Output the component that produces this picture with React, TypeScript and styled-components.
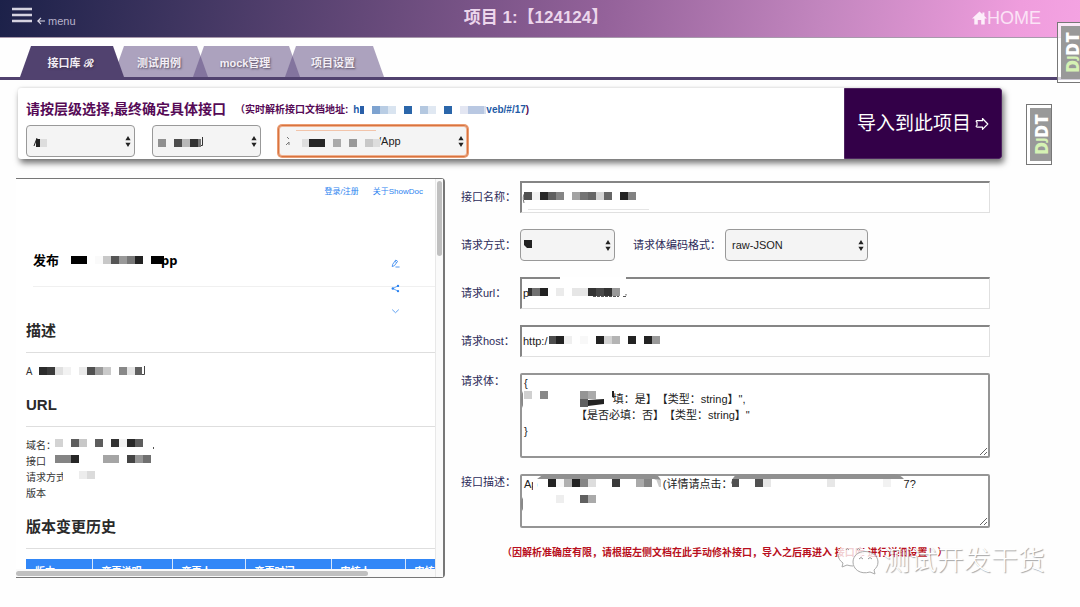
import React from 'react';
import styled, { createGlobalStyle, css } from 'styled-components';

const GlobalStyle = createGlobalStyle`
  * { box-sizing: border-box; }
  body {
    margin: 0;
    background: #fefefe;
    font-family: "Liberation Sans", "Noto Sans CJK SC", sans-serif;
    font-size: 11px;
    color: #222;
    text-spacing-trim: space-all;
  }
  a { text-decoration: none; }
`;

/* ---------- shared pieces ---------- */

type Cell = [x: number, y: number, w: number, h: number, fill: string];

const MosaicSvg = styled.svg`
  position: absolute;
  inset: 0;
  width: 100%;
  height: 100%;
  pointer-events: none;
`;

const Mosaic = ({ cells, children }: { cells: Cell[]; children?: React.ReactNode }) => (
  <MosaicSvg aria-hidden="true">
    {children}
    {cells.map(([x, y, w, h, fill], i) => (
      <rect key={i} x={x} y={y} width={w} height={h} fill={fill} />
    ))}
  </MosaicSvg>
);

/* ---------- header ---------- */

const Page = styled.div`
  position: relative;
  overflow: hidden;
  min-height: 100vh;
`;

const Header = styled.header`
  display: grid;
  grid-template-columns: 1fr auto 1fr;
  align-items: center;
  height: 38px;
  padding: 0 20px 2px 12px;
  border-bottom: 1px solid #a899ac;
  background: linear-gradient(100deg, #1c2149 0%, #3d345f 16%, #6b4c7d 37%, #94629a 56%, #c386bf 76%, #ef9ddd 94%, #f4a3e2 100%);
  color: #ecd6ec;
`;

const MenuButton = styled.button`
  display: flex;
  align-items: flex-end;
  gap: 5px;
  justify-self: start;
  padding: 0 0 6px;
  border: 0;
  background: none;
  color: #b9b4cc;
  font: 11px/12px "Liberation Sans", sans-serif;
`;

const MenuLabel = styled.span`
  display: flex;
  align-items: center;
  gap: 3px;
  margin-bottom: -4px;
`;

const ProjectTitle = styled.h1`
  margin: 0;
  font-size: 17px;
  line-height: 24px;
  font-weight: 700;
`;

const HomeLink = styled.a`
  display: flex;
  align-items: center;
  justify-self: end;
  margin-right: 19px;
  color: #fbe3f6;
  font-size: 18px;
  line-height: 24px;
`;

/* ---------- tabs ---------- */

const TabBar = styled.nav`
  display: flex;
  padding: 8px 20px 0;
  border-bottom: 3px solid #51426f;
`;

const Tab = styled.button<{ $active?: boolean; $width: number }>`
  width: ${p => p.$width}px;
  height: 31px;
  padding: 2px 3px 0 0;
  border: 0;
  clip-path: polygon(11px 0, calc(100% - 11px) 0, 100% 100%, 0 100%);
  background: ${p => (p.$active ? '#51426f' : 'rgba(89, 70, 125, 0.5)')};
  color: #f3eef5;
  font: 700 11px/28px "Liberation Sans", "Noto Sans CJK SC", sans-serif;
  text-shadow: 1px 1px 2px rgba(50, 40, 60, 0.7);
  ${p => p.$active && css`position: relative; z-index: 1;`}
  & + & { margin-left: -11px; }
  & + & + & { margin-left: -15px; }
`;

/* ---------- selector card ---------- */

const Card = styled.section`
  display: flex;
  justify-content: space-between;
  min-height: 71px;
  margin: 8px 78px 0 18px;
  border-radius: 3px;
  background: #fff;
  box-shadow: 2px 4px 6px #6f6f6f, 0 -1px 2px #eee;
`;

const CardBody = styled.div`
  padding: 9px 8px 0;
`;

const CardTitle = styled.h2`
  display: flex;
  align-items: center;
  margin: 0 0 4px;
  color: #560a56;
  font-size: 14px;
  line-height: 22px;
  font-weight: 700;
`;

const SourceNote = styled.span`
  display: flex;
  align-items: center;
  margin-left: 9px;
  padding-top: 2px;
  font-size: 10px;
  font-weight: 700;
`;

const SourceLink = styled.a`
  display: flex;
  align-items: center;
  margin-left: 5px;
  color: #1f5ba6;
`;

const SelectRow = styled.div`
  display: flex;
  gap: 17px;
`;

const ImportButton = styled.button`
  flex: none;
  display: flex;
  align-items: center;
  justify-content: center;
  gap: 4px;
  width: 158px;
  border: 1px solid #4d2360;
  border-radius: 0 3px 3px 0;
  background: #330048;
  color: #fff;
  font: 19px/24px "Liberation Sans", "Noto Sans CJK SC", sans-serif;
`;

const SelectBox = styled.span<{ $width: number }>`
  position: relative;
  display: flex;
  width: ${p => p.$width}px;
  height: 32px;
`;

const SelectControl = styled.select<{ $indent?: number; $focused?: boolean }>`
  appearance: none;
  width: 100%;
  padding: 0 0 0 ${p => p.$indent ?? 6}px;
  border: 1px solid #999;
  border-radius: 4px;
  background: #f4f4f4;
  color: #222;
  font: 11px "Liberation Sans", "Noto Sans CJK SC", sans-serif;
  ${p =>
    p.$focused &&
    css`
      border-color: #d8743f;
      box-shadow: 0 0 0 1px #eb9c72, inset 0 0 0 1px #efb292;
    `}
`;

const SelectArrows = styled.svg`
  position: absolute;
  top: 11px;
  right: 4px;
  pointer-events: none;
`;

interface SelectProps {
  id: string;
  width: number;
  value?: string;
  indent?: number;
  focused?: boolean;
  label?: string;
  cells: Cell[];
  children?: React.ReactNode;
}

const Select = ({ id, width, value = '', indent, focused, label, cells, children }: SelectProps) => (
  <SelectBox $width={width}>
    <SelectControl id={id} aria-label={label} $indent={indent} $focused={focused}>
      <option>{value}</option>
    </SelectControl>
    <Mosaic cells={cells}>{children}</Mosaic>
    <SelectArrows width="6" height="11" viewBox="0 0 6 11" aria-hidden="true">
      <path d="M3 0 L5.6 4.3 H.4Z M3 11 L5.6 6.7 H.4Z" fill="#222" />
    </SelectArrows>
  </SelectBox>
);

/* ---------- document preview ---------- */

const Workspace = styled.main`
  display: grid;
  grid-template-columns: minmax(0, 429fr) minmax(0, 529fr);
  column-gap: 16px;
  margin: 19px 90px 0 16px;
`;

const DocPanel = styled.section`
  display: grid;
  grid-template: minmax(0, 1fr) 8px / minmax(0, 1fr) 8px;
  height: 400px;
  border: solid #777;
  border-width: 1px 2px 1px 0;
  border-radius: 0 4px 4px 0;
  background: #fff;
`;

const DocView = styled.div`
  position: relative;
  overflow: hidden;
  padding: 7px 0 0 10px;
`;

const VerticalTrack = styled.div`
  grid-row: 1 / 3;
  grid-column: 2;
  padding: 2px 1px;
  border-left: 1px solid #e8e8e8;
  background: #fafafa;
`;

const HorizontalTrack = styled.div`
  padding: 2px 0 1px;
  background: #fafafa;
`;

const Thumb = styled.div<{ $vertical?: boolean }>`
  border-radius: 3px;
  background: #c0c0c0;
  ${p => (p.$vertical ? 'height: 75px;' : 'width: 84%; height: 5px;')}
`;

const DocNav = styled.div`
  display: flex;
  justify-content: flex-end;
  gap: 14px;
  padding-right: 12px;
  font-size: 8px;
  line-height: 12px;
  a { color: #2d84f0; }
`;

const DocTitle = styled.h2`
  position: relative;
  margin: 52px 0 0 7px;
  padding-bottom: 16px;
  border-bottom: 1px solid #f0f0f0;
  color: #000;
  font: 700 13px/20px "Noto Sans", "Noto Sans CJK SC", sans-serif;
`;

const TitleTail = styled.span`
  margin-left: 102px;
`;

const DocHeading = styled.h3<{ $first?: boolean }>`
  margin: ${p => (p.$first ? 33 : 15)}px 0 10px;
  padding-bottom: 10px;
  border-bottom: 1px solid #dedede;
  color: #2a2a2a;
  font: 700 15px/22px "Liberation Sans", "Noto Sans CJK SC", sans-serif;
`;

const DocText = styled.p`
  position: relative;
  margin: 0;
  color: #333;
  font: 10px/16px "Noto Sans", "Noto Sans CJK SC", sans-serif;
`;

const DocTools = styled.div`
  position: absolute;
  top: 80px;
  right: 35px;
  display: flex;
  flex-direction: column;
  gap: 16px;
  a { display: block; height: 9px; line-height: 0; }
`;

const HistoryTable = styled.table`
  width: 500px;
  table-layout: fixed;
  border-collapse: collapse;
  th {
    padding: 4px 9px;
    border-right: 1px solid #d7e7fb;
    background: #3287f7;
    color: #fff;
    font: 700 10px/16px "Noto Sans CJK SC", sans-serif;
    text-align: left;
    white-space: nowrap;
  }
`;

/* ---------- form ---------- */

const Form = styled.form`
  display: flex;
  flex-direction: column;
  gap: 16px;
  padding-top: 3px;
`;

const FormRow = styled.div<{ $top?: boolean }>`
  display: flex;
  align-items: ${p => (p.$top ? 'flex-start' : 'center')};
  min-height: 32px;
`;

const FieldLabel = styled.label<{ $inline?: boolean }>`
  flex: none;
  width: ${p => (p.$inline ? 92 : 59)}px;
  margin-left: ${p => (p.$inline ? 18 : 0)}px;
  color: #2c2a58;
  line-height: 16px;
  white-space: nowrap;
`;

const Field = styled.div`
  position: relative;
  display: flex;
  flex: 1;
  min-width: 0;
`;

const fieldStyle = css`
  flex: 1;
  min-width: 0;
  margin: 0;
  padding: 0 1px 1px;
  background: #fff;
  color: #222;
  font: 11px/16px "Liberation Sans", "Noto Sans CJK SC", sans-serif;
  text-spacing-trim: space-all;
`;

const TextInput = styled.input`
  ${fieldStyle}
  height: 32px;
  border: solid;
  border-width: 2px 1px 1px 2px;
  border-color: #858585 #e0e0e0 #e0e0e0 #858585;
`;

const TextArea = styled.textarea<{ $height: number }>`
  ${fieldStyle}
  height: ${p => p.$height}px;
  padding: 0 2px;
  border: 2px solid #959595;
  border-radius: 2px;
  overflow: hidden;
`;

const Warning = styled.p`
  margin: 1px 0 0 41px;
  color: #b80f20;
  font-size: 10px;
  line-height: 16px;
  font-weight: 700;
  white-space: nowrap;
`;

/* ---------- floating pieces ---------- */

const DebugHandle = styled.button<{ $top: number; $right: number }>`
  position: absolute;
  top: ${p => p.$top}px;
  right: ${p => p.$right}px;
  width: 26px;
  height: 61px;
  padding: 3px 0 3px 3px;
  border: 1px solid #777;
  background: rgba(255, 255, 255, 0.75);
`;

const DebugText = styled.span`
  display: flex;
  justify-content: center;
  align-items: center;
  width: 100%;
  height: 100%;
  background: #999;
  color: #fff;
  font: 800 18px/16px "Open Sans", sans-serif;
  writing-mode: vertical-rl;
  transform: rotate(180deg);
  i { color: #d5f2b4; font-style: normal; }
  small { font-size: 12px; }
`;

const Watermark = styled.div`
  position: absolute;
  top: 541px;
  right: 35px;
  display: flex;
  align-items: center;
  gap: 4px;
  color: #fff;
  font: 300 27px/36px "Noto Sans CJK SC", sans-serif;
  text-shadow: 1px 1px 1px #a2a2a2;
`;

const DjDT = ({ top, right }: { top: number; right: number }) => (
  <DebugHandle $top={top} $right={right} type="button">
    <DebugText>
      <i>D<small>J</small></i>DT
    </DebugText>
  </DebugHandle>
);

const sp = (n: number) => ' '.repeat(n);

const bodyValue = [
  '{',
  `${sp(29)}填：是】【类型：string】",`,
  `${sp(17)}【是否必填：否】【类型：string】"`,
  '}',
].join('\n');

const descValue = `Ap${sp(41)}(详情请点击：${sp(56)}7?`;

const columns: [string, number][] = [
  ['版本', 66],
  ['变更说明', 80],
  ['变更人', 73],
  ['变更时间', 86],
  ['审核人', 74],
  ['审核时间', 121],
];

export default function App() {
  return (
    <Page>
      <GlobalStyle />
      <Header>
        <MenuButton type="button">
          <svg width="20" height="16" viewBox="0 0 20 16" aria-hidden="true">
            <path d="M0 2H20M0 8H20M0 14H20" stroke="#d5d3e0" strokeWidth="2.4" />
          </svg>
          <MenuLabel>
            <svg width="8" height="8" viewBox="0 0 8 8" aria-hidden="true">
              <path d="M4 .8 .8 4 4 7.2M.8 4H8" fill="none" stroke="#dedbe8" strokeWidth="1.1" />
            </svg>
            menu
          </MenuLabel>
        </MenuButton>
        <ProjectTitle>项目 1:【124124】</ProjectTitle>
        <HomeLink href="#">
          <svg width="15" height="14" viewBox="0 0 15 14" aria-hidden="true">
            <path
              d="M7.5.5 10.4 3.2V1.6H12.4V5.1L15 7.6H12.7V13.4H9.2V9H5.8V13.4H2.3V7.6H0Z"
              fill="#fdeefa"
            />
          </svg>
          HOME
        </HomeLink>
      </Header>

      <TabBar>
        <Tab $active $width={104} type="button">接口库 ℛ</Tab>
        <Tab $width={95} type="button">测试用例</Tab>
        <Tab $width={107} type="button">mock管理</Tab>
        <Tab $width={99} type="button">项目设置</Tab>
      </TabBar>

      <Card>
        <CardBody>
          <CardTitle>
            请按层级选择,最终确定具体接口
            <SourceNote>
              （实时解析接口文档地址:
              <SourceLink href="#/17">
                h
                <svg width="127" height="8" aria-hidden="true">
                  <g>
                    <rect x="1" width="4" height="8" fill="#2a5fa8" />
                    <rect x="13" width="8" height="8" fill="#7ea3d0" />
                    <rect x="21" width="8" height="8" fill="#b9cde4" />
                    <rect x="29" width="8" height="8" fill="#d9e4f0" />
                    <rect x="45" width="8" height="8" fill="#2b66aa" />
                    <rect x="61" width="8" height="8" fill="#b4c8e0" />
                    <rect x="69" width="8" height="8" fill="#e0e8f2" />
                    <rect x="85" width="8" height="8" fill="#2b66aa" />
                    <rect x="101" width="8" height="8" fill="#e3e6f2" />
                    <rect x="109" width="16" height="8" fill="#b9c8e2" />
                    <rect x="125" width="2" height="8" fill="#d5dfee" />
                  </g>
                </svg>
                veb/#/17
              </SourceLink>
              )
            </SourceNote>
          </CardTitle>
          <SelectRow>
            <Select
              id="level-one"
              label="一级目录"
              width={109}
              cells={[[10, 14, 4, 8, '#222'], [14, 14, 7, 8, '#ddd']]}
            >
              <path d="M8 21 11 13" stroke="#222" />
            </Select>
            <Select
              id="level-two"
              label="二级目录"
              width={109}
              cells={[
                [6, 14, 8, 8, '#909090'],
                [22, 14, 8, 8, '#4d4d4d'],
                [30, 14, 8, 8, '#b8b8b8'],
                [38, 14, 8, 8, '#333'],
                [46, 14, 3, 8, '#777'],
              ]}
            >
              <path d="M50.5 12V20.5H48" fill="none" stroke="#333" />
            </Select>
            <Select
              id="level-three"
              label="接口"
              width={190}
              indent={99}
              value="/App"
              focused
              cells={[
                [24, 14, 7, 8, '#dedede'],
                [31, 14, 16, 8, '#262626'],
                [55, 14, 8, 8, '#aaa'],
                [71, 14, 8, 8, '#999'],
                [87, 14, 8, 8, '#c8c8c8'],
                [95, 14, 7, 8, '#ddd'],
              ]}
            >
              <path d="M9 12 11 14M8 20 11 17V20" fill="none" stroke="#777" />
              <path d="M18 5.500H98" stroke="#f2c4aa" />
            </Select>
          </SelectRow>
        </CardBody>
        <ImportButton type="button">
          导入到此项目
          <svg width="14" height="14" viewBox="0 0 14 14" aria-hidden="true">
            <path
              d="M1.200 4.500Q1.200 3.700 2 3.700H7.500V1.500L12.800 7 7.500 12.300V10.200H2.200Q1.200 10.200 1.200 9.200L2 8.300V5.300Z"
              fill="none"
              stroke="#fff"
              strokeWidth="1.200"
              strokeLinejoin="round"
            />
          </svg>
        </ImportButton>
      </Card>

      <Workspace>
        <DocPanel>
          <DocView>
            <DocNav>
              <a href="#login">登录/注册</a>
              <a href="#about">关于ShowDoc</a>
            </DocNav>
            <DocTitle>
              发布
              <TitleTail>pp</TitleTail>
              <Mosaic
                cells={[
                  [38, 6, 16, 8, '#000'],
                  [62, 6, 8, 8, '#fafafa'],
                  [70, 6, 8, 8, '#c8c8c8'],
                  [78, 6, 8, 8, '#555'],
                  [86, 6, 8, 8, '#999'],
                  [94, 6, 8, 8, '#777'],
                  [102, 6, 8, 8, '#222'],
                  [118, 6, 13, 8, '#000'],
                ]}
              />
            </DocTitle>
            <DocHeading $first>描述</DocHeading>
            <DocText>
              A
              <Mosaic
                cells={[
                  [13, 4, 8, 8, '#2c2c2c'],
                  [21, 4, 8, 8, '#3b3b3b'],
                  [29, 4, 8, 8, '#e0e0e0'],
                  [37, 4, 8, 8, '#f2f2f2'],
                  [53, 4, 8, 8, '#eaeaea'],
                  [61, 4, 8, 8, '#505050'],
                  [69, 4, 8, 8, '#9b9b9b'],
                  [77, 4, 8, 8, '#cacaca'],
                  [93, 4, 8, 8, '#888'],
                  [101, 4, 8, 8, '#e4e4e4'],
                  [109, 4, 7, 8, '#606060'],
                ]}
              >
                <path d="M118.5 3V11.5H116" fill="none" stroke="#444" />
              </Mosaic>
            </DocText>
            <DocHeading>URL</DocHeading>
            <DocText>
              域名：<br />
              接口<br />
              请求方式<br />
              版本
              <Mosaic
                cells={[
                  [29, 2, 8, 8, '#d3d3d3'],
                  [45, 2, 8, 8, '#5d5d5d'],
                  [53, 2, 8, 8, '#c8c8c8'],
                  [69, 2, 8, 8, '#5d5d5d'],
                  [85, 2, 8, 8, '#333'],
                  [93, 2, 8, 8, '#f2f2f2'],
                  [101, 2, 8, 8, '#282828'],
                  [109, 2, 8, 8, '#5d5d5d'],
                  [127, 10, 1, 2, '#555'],
                  [29, 18, 16, 8, '#848484'],
                  [45, 18, 8, 8, '#262626'],
                  [77, 18, 16, 8, '#a5a5a5'],
                  [101, 18, 8, 8, '#444'],
                  [109, 18, 8, 8, '#969696'],
                  [117, 18, 8, 8, '#707070'],
                  [37, 32, 6, 16, '#fff'],
                  [53, 34, 8, 8, '#ececec'],
                  [61, 34, 8, 8, '#dbdbdb'],
                ]}
              />
            </DocText>
            <DocHeading>版本变更历史</DocHeading>
            <HistoryTable>
              <colgroup>
                {columns.map(([name, width]) => (
                  <col key={name} width={width} />
                ))}
              </colgroup>
              <thead>
                <tr>
                  {columns.map(([name]) => (
                    <th key={name}>{name}</th>
                  ))}
                </tr>
              </thead>
            </HistoryTable>
            <DocTools>
              <a href="#edit" aria-label="编辑">
                <svg width="9" height="9" viewBox="0 0 9 9" fill="none" stroke="#3f8df0" strokeWidth=".9">
                  <path d="M1.2 7.6 1.7 5.3 4.8 1 6.6 2.3 3.5 6.6ZM4.5 8H8.6M3.9 2.3 5.7 3.6" />
                </svg>
              </a>
              <a href="#share" aria-label="分享">
                <svg width="9" height="9" viewBox="0 0 9 9" fill="#2d84f0">
                  <path d="M1.8 4.5 7 1.9M1.8 4.5 7 7.1" stroke="#2d84f0" strokeWidth=".7" />
                  <circle cx="1.8" cy="4.5" r="1.2" />
                  <circle cx="7" cy="1.9" r="1.2" />
                  <circle cx="7" cy="7.1" r="1.2" />
                </svg>
              </a>
              <a href="#more" aria-label="展开">
                <svg width="9" height="5" viewBox="0 0 9 5" fill="none" stroke="#62a3f3">
                  <path d="M1.2 .6 4.5 3.7 7.8 .6" />
                </svg>
              </a>
            </DocTools>
          </DocView>
          <HorizontalTrack>
            <Thumb />
          </HorizontalTrack>
          <VerticalTrack>
            <Thumb $vertical />
          </VerticalTrack>
        </DocPanel>

        <Form>
          <FormRow>
            <FieldLabel htmlFor="api-name">接口名称：</FieldLabel>
            <Field>
              <TextInput id="api-name" />
              <Mosaic
                cells={[
                  [4, 11, 8, 8, '#505050'],
                  [12, 11, 8, 8, '#f2f2f2'],
                  [20, 11, 8, 8, '#282828'],
                  [28, 11, 8, 8, '#606060'],
                  [36, 11, 8, 8, '#858585'],
                  [52, 11, 8, 8, '#a3a3a3'],
                  [60, 11, 8, 8, '#747474'],
                  [68, 11, 8, 8, '#666'],
                  [76, 11, 8, 8, '#d5d5d5'],
                  [84, 11, 8, 8, '#666'],
                  [100, 11, 8, 8, '#222'],
                  [108, 11, 8, 8, '#828282'],
                ]}
              >
                <path d="M8 28.5H129" stroke="#e5e5e5" />
                <path d="M5 12Q2 15 4 22" fill="none" stroke="#777" />
              </Mosaic>
            </Field>
          </FormRow>
          <FormRow>
            <FieldLabel htmlFor="method">请求方式：</FieldLabel>
            <Select id="method" width={95} cells={[]}>
              <path d="M4 11H12V19H7L4 16Z" fill="#222" />
            </Select>
            <FieldLabel $inline htmlFor="encoding">请求体编码格式：</FieldLabel>
            <Select id="encoding" width={143} value="raw-JSON" cells={[]} />
          </FormRow>
          <FormRow>
            <FieldLabel htmlFor="url">请求url：</FieldLabel>
            <Field>
              <TextInput id="url" defaultValue="p" />
              <Mosaic
                cells={[
                  [40, 0, 66, 2, '#fff'],
                  [8, 11, 4, 8, '#333'],
                  [12, 11, 8, 8, '#707070'],
                  [20, 11, 8, 8, '#222'],
                  [36, 11, 8, 8, '#ebebeb'],
                  [52, 11, 16, 8, '#e6e6e6'],
                  [68, 11, 8, 8, '#333'],
                  [76, 11, 8, 8, '#484848'],
                  [84, 11, 8, 8, '#333'],
                  [92, 11, 8, 8, '#999'],
                ]}
              >
                <path d="M73 19.5H99M103 19.5H106V17" fill="none" stroke="#555" strokeDasharray="3 1" />
              </Mosaic>
            </Field>
          </FormRow>
          <FormRow>
            <FieldLabel htmlFor="host">请求host：</FieldLabel>
            <Field>
              <TextInput id="host" defaultValue="http:/" />
              <Mosaic
                cells={[
                  [29, 11, 7, 8, '#4d4d4d'],
                  [36, 11, 8, 8, '#222'],
                  [44, 11, 8, 8, '#efefef'],
                  [60, 11, 8, 8, '#f8f8f8'],
                  [76, 11, 8, 8, '#222'],
                  [84, 11, 8, 8, '#d3d3d3'],
                  [92, 11, 8, 8, '#b4b4b4'],
                  [108, 11, 8, 8, '#222'],
                  [124, 11, 8, 8, '#222'],
                  [132, 11, 8, 8, '#999'],
                ]}
              />
            </Field>
          </FormRow>
          <FormRow $top>
            <FieldLabel htmlFor="body">请求体：</FieldLabel>
            <Field>
              <TextArea id="body" $height={85} defaultValue={bodyValue} />
              <Mosaic
                cells={[
                  [4, 18, 8, 8, '#d0d0d0'],
                  [20, 18, 8, 8, '#888'],
                  [60, 18, 8, 8, '#959595'],
                  [68, 18, 8, 8, '#aaa'],
                  [60, 26, 8, 8, '#606060'],
                ]}
              >
                <path d="M68 27 84 26V31L68 33Z" fill="#222" />
                <path d="M92 18H94V25L92 24Z" fill="#222" />
                <path d="M3 18V35Q-1 26 3 18Z" fill="#888" />
              </Mosaic>
            </Field>
          </FormRow>
          <FormRow $top>
            <FieldLabel htmlFor="description">接口描述：</FieldLabel>
            <Field>
              <TextArea id="description" $height={54} defaultValue={descValue} />
              <Mosaic
                cells={[
                  [13, 4, 4, 14, '#fff'],
                  [28, 5, 8, 8, '#222'],
                  [36, 5, 8, 8, '#f7f7f7'],
                  [44, 5, 8, 8, '#b0b0b0'],
                  [52, 5, 8, 8, '#222'],
                  [60, 5, 8, 8, '#858585'],
                  [68, 5, 8, 8, '#ddd'],
                  [92, 5, 8, 8, '#3a3a3a'],
                  [116, 5, 8, 8, '#aaa'],
                  [124, 5, 8, 8, '#858585'],
                  [212, 5, 7, 8, '#505050'],
                  [235, 5, 8, 8, '#505050'],
                  [243, 5, 8, 8, '#e7e7e7'],
                  [307, 5, 8, 8, '#e7e7e7'],
                  [363, 5, 8, 8, '#f2f2f2'],
                  [36, 21, 8, 8, '#eee'],
                  [60, 21, 8, 8, '#606060'],
                  [68, 21, 8, 8, '#aaa'],
                ]}
              >
                <path d="M17 5 24 0H134Q140 2 141 7L134 5Z" fill="#909090" />
                <path d="M136 5 141 6V13H139Z" fill="#ccc" />
                <path d="M211 9Q213 0 221 0H374Q381 1 384 5H219L214 12Z" fill="#909090" />
                <path d="M3 23V37Q-1 30 3 23Z" fill="#888" />
              </Mosaic>
            </Field>
          </FormRow>
          <Warning>（因解析准确度有限，请根据左侧文档在此手动修补接口，导入之后再进入 接口库 进行详细设置！）</Warning>
        </Form>
      </Workspace>

      <DjDT top={22} right={-3} />
      <DjDT top={104} right={28} />

      <Watermark>
        <svg width="42" height="34" viewBox="0 0 42 34" aria-hidden="true">
          <path
            d="M28 10C26 4 20 1 14 1 7 1 1 6 1 12 1 16 3 19 6 21L5 25 10 23Q13 24 16 24"
            fill="#fff"
            fillOpacity=".8"
          />
          <path d="M1 12C1 16 3 19 6 21L5 25 10 23Q13 24 16 24" fill="none" stroke="#aaa" />
          <path
            d="M28 9.500C35 9.500 41 14 41 20 41 24 39 26 37 28L38 32 33 30C23 33 16 27 16 20 16 14 21 9.500 28 9.500Z"
            fill="#fff"
            fillOpacity=".8"
            stroke="#aaa"
          />
          <g fill="none" stroke="#999">
            <path d="M9 8Q10 5 12 8M20 8Q21 5 23 8M22 17Q24 14 26 17M31 17Q33 14 35 17" />
          </g>
        </svg>
        测试开发干货
      </Watermark>
    </Page>
  );
}
